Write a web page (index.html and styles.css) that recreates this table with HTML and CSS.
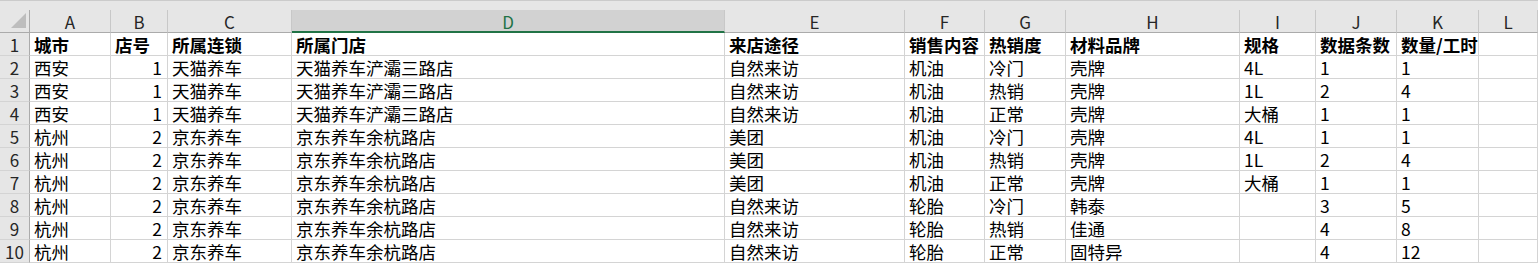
FILE: index.html
```html
<!DOCTYPE html>
<html lang="zh">
<head>
<meta charset="utf-8">
<link rel="stylesheet" href="styles.css">
</head>
<body>
<div class="topbar"></div>
<div class="sheet">
  <div class="corner"><span class="tri"></span></div>
  <div class="ch">A</div><div class="ch">B</div><div class="ch">C</div><div class="ch sel">D</div><div class="ch">E</div><div class="ch">F</div><div class="ch">G</div><div class="ch">H</div><div class="ch">I</div><div class="ch">J</div><div class="ch">K</div><div class="ch">L</div>

  <div class="rh">1</div><div class="c b">城市</div><div class="c b">店号</div><div class="c b">所属连锁</div><div class="c b">所属门店</div><div class="c b">来店途径</div><div class="c b">销售内容</div><div class="c b">热销度</div><div class="c b">材料品牌</div><div class="c b">规格</div><div class="c b">数据条数</div><div class="c b">数量/工时</div><div class="c"></div>

  <div class="rh">2</div><div class="c">西安</div><div class="c r">1</div><div class="c">天猫养车</div><div class="c">天猫养车浐灞三路店</div><div class="c">自然来访</div><div class="c">机油</div><div class="c">冷门</div><div class="c">壳牌</div><div class="c">4L</div><div class="c">1</div><div class="c">1</div><div class="c"></div>

  <div class="rh">3</div><div class="c">西安</div><div class="c r">1</div><div class="c">天猫养车</div><div class="c">天猫养车浐灞三路店</div><div class="c">自然来访</div><div class="c">机油</div><div class="c">热销</div><div class="c">壳牌</div><div class="c">1L</div><div class="c">2</div><div class="c">4</div><div class="c"></div>

  <div class="rh">4</div><div class="c">西安</div><div class="c r">1</div><div class="c">天猫养车</div><div class="c">天猫养车浐灞三路店</div><div class="c">自然来访</div><div class="c">机油</div><div class="c">正常</div><div class="c">壳牌</div><div class="c">大桶</div><div class="c">1</div><div class="c">1</div><div class="c"></div>

  <div class="rh">5</div><div class="c">杭州</div><div class="c r">2</div><div class="c">京东养车</div><div class="c">京东养车余杭路店</div><div class="c">美团</div><div class="c">机油</div><div class="c">冷门</div><div class="c">壳牌</div><div class="c">4L</div><div class="c">1</div><div class="c">1</div><div class="c"></div>

  <div class="rh">6</div><div class="c">杭州</div><div class="c r">2</div><div class="c">京东养车</div><div class="c">京东养车余杭路店</div><div class="c">美团</div><div class="c">机油</div><div class="c">热销</div><div class="c">壳牌</div><div class="c">1L</div><div class="c">2</div><div class="c">4</div><div class="c"></div>

  <div class="rh">7</div><div class="c">杭州</div><div class="c r">2</div><div class="c">京东养车</div><div class="c">京东养车余杭路店</div><div class="c">美团</div><div class="c">机油</div><div class="c">正常</div><div class="c">壳牌</div><div class="c">大桶</div><div class="c">1</div><div class="c">1</div><div class="c"></div>

  <div class="rh">8</div><div class="c">杭州</div><div class="c r">2</div><div class="c">京东养车</div><div class="c">京东养车余杭路店</div><div class="c">自然来访</div><div class="c">轮胎</div><div class="c">冷门</div><div class="c">韩泰</div><div class="c"></div><div class="c">3</div><div class="c">5</div><div class="c"></div>

  <div class="rh">9</div><div class="c">杭州</div><div class="c r">2</div><div class="c">京东养车</div><div class="c">京东养车余杭路店</div><div class="c">自然来访</div><div class="c">轮胎</div><div class="c">热销</div><div class="c">佳通</div><div class="c"></div><div class="c">4</div><div class="c">8</div><div class="c"></div>

  <div class="rh">10</div><div class="c">杭州</div><div class="c r">2</div><div class="c">京东养车</div><div class="c">京东养车余杭路店</div><div class="c">自然来访</div><div class="c">轮胎</div><div class="c">正常</div><div class="c">固特异</div><div class="c"></div><div class="c">4</div><div class="c">12</div><div class="c"></div>
</div>
</body>
</html>
```

FILE: styles.css
```css
html, body {
  margin: 0;
  padding: 0;
  background: #ffffff;
  overflow: hidden;
}
body {
  font-family: "Noto Sans CJK SC", "Noto Sans", sans-serif;
  color: #000;
}
.topbar {
  height: 9px;
  border-top: 1px solid #cbcbcb;
  background: #e6e6e6;
}
.sheet {
  display: grid;
  grid-template-columns: 30px 81px 57px 124px 433px 180px 80px 81px 174px 76px 81px 82px 1fr;
  grid-auto-rows: 23px;
}
.corner {
  background: #e6e6e6;
  border-right: 1px solid #ababab;
  border-bottom: 1px solid #ababab;
  box-sizing: border-box;
  position: relative;
}
.tri {
  position: absolute;
  right: 3px;
  bottom: 4px;
  width: 0;
  height: 0;
  border-left: 15px solid transparent;
  border-bottom: 15px solid #bdbdbd;
}
.ch {
  background: #e6e6e6;
  border-right: 1px solid #c8c8c8;
  border-bottom: 1px solid #ababab;
  box-sizing: border-box;
  text-align: center;
  font-size: 17px;
  line-height: 24px;
  color: #262626;
}
.ch.sel {
  background: #d2d2d2;
  color: #217346;
  border-bottom: 2px solid #217346;
  line-height: 23px;
}
.rh {
  background: #e6e6e6;
  border-right: 1px solid #ababab;
  border-bottom: 1px solid #d4d4d4;
  box-sizing: border-box;
  text-align: center;
  font-size: 17px;
  line-height: 23px;
  color: #262626;
}
.c {
  border-right: 1px solid #d4d4d4;
  border-bottom: 1px solid #d4d4d4;
  box-sizing: border-box;
  font-size: 17.5px;
  line-height: 23px;
  padding: 0 4px;
  white-space: nowrap;
  overflow: hidden;
}
.c.b {
  font-weight: bold;
}
.c.r {
  text-align: right;
  padding-right: 5px;
}
```
